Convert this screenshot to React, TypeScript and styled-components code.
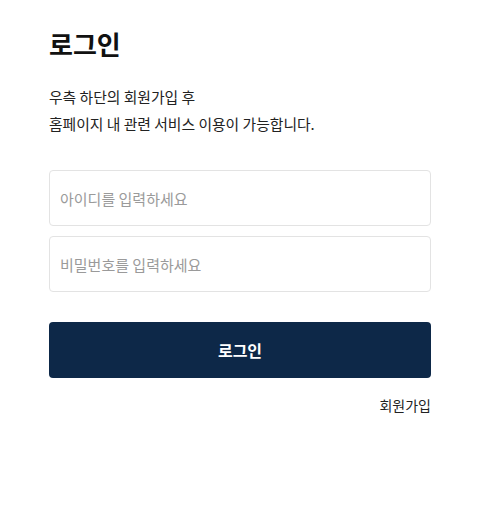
import React from "react";
import styled, { createGlobalStyle } from "styled-components";

const GlobalStyle = createGlobalStyle`
  html, body {
    margin: 0;
    padding: 0;
    background: #fff;
  }
  body {
    font-family: "Noto Sans CJK KR", "Noto Sans", sans-serif;
    color: #222;
  }
`;

const Page = styled.div`
  padding: 26px 52px 0 49px;
`;

const Wrap = styled.div`
  width: 382px;
  display: flex;
  flex-direction: column;
`;

const Title = styled.h1`
  margin: 0;
  font-size: 26px;
  line-height: 36px;
  font-weight: 700;
  color: #111;
`;

const Desc = styled.p`
  margin: 21px 0 0;
  font-size: 14.8px;
  line-height: 27px;
  color: #222;
`;

const Fields = styled.div`
  margin-top: 33px;
  display: flex;
  flex-direction: column;
  gap: 10px;
`;

const Input = styled.input`
  box-sizing: border-box;
  height: 56px;
  width: 100%;
  padding: 0 10px;
  border: 1px solid #e3e3e3;
  border-radius: 4px;
  font-family: inherit;
  font-size: 15px;
  color: #222;
  outline: none;
  &::placeholder {
    color: #9a9a9a;
  }
`;

const Submit = styled.button`
  margin-top: 30px;
  height: 56px;
  width: 100%;
  border: 0;
  border-radius: 4px;
  background: #0d2848;
  color: #fff;
  font-family: inherit;
  font-size: 16px;
  font-weight: 700;
  cursor: pointer;
`;

const Footer = styled.div`
  margin-top: 17px;
  display: flex;
  justify-content: flex-end;
`;

const Link = styled.a`
  font-size: 14px;
  line-height: 20px;
  color: #222;
  text-decoration: none;
`;

export default function App() {
  return (
    <Page>
      <GlobalStyle />
      <Wrap>
        <Title>로그인</Title>
        <Desc>
          우측 하단의 회원가입 후
          <br />
          홈페이지 내 관련 서비스 이용이 가능합니다.
        </Desc>
        <Fields>
          <Input type="text" placeholder="아이디를 입력하세요" />
          <Input type="password" placeholder="비밀번호를 입력하세요" />
        </Fields>
        <Submit type="button">로그인</Submit>
        <Footer>
          <Link href="#">회원가입</Link>
        </Footer>
      </Wrap>
    </Page>
  );
}
